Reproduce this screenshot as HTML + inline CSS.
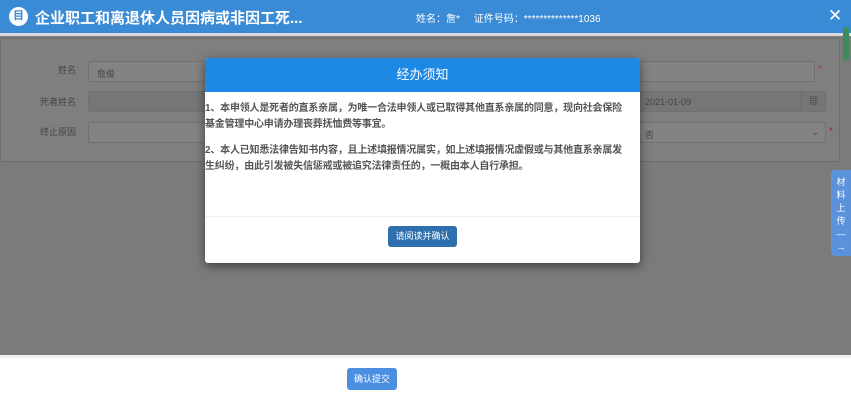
<!DOCTYPE html>
<html><head><meta charset="utf-8"><style>
*{margin:0;padding:0;box-sizing:border-box}
body{width:851px;height:404px;overflow:hidden;position:relative;font-family:"Liberation Sans","Noto Sans CJK SC",sans-serif;background:#7b7b7b}
.hdr{position:absolute;left:0;top:0;width:851px;height:33px;background:#3a8bd5;color:#fff}
.hdr .t{position:absolute;left:35px;top:7px;font-size:15px;font-weight:bold}
.hdr .ic{position:absolute;left:9px;top:7px;width:19px;height:19px;border-radius:50%;background:#fff;color:#3a8bd5;font-size:11px;text-align:center;line-height:19px;font-weight:bold}
.hdr .info{position:absolute;left:416px;top:10px;font-size:10px}
.hdr .x{position:absolute;left:828px;top:6px;font-size:17px;font-weight:300}
.strip{position:absolute;left:0;top:33px;width:851px;height:3px;background:#d8d8d8}
.panel{position:absolute;left:0;top:38px;width:840px;height:124px;background:#7f7f7f;border:1px solid #6e6e6e}
.lbl{position:absolute;font-size:9px;color:#444;text-align:right;width:60px}
.inp{position:absolute;background:#838383;border:1px solid #707070;border-radius:2px;font-size:9px;color:#444;padding:5px 8px}
.modal{position:absolute;left:205px;top:58px;width:435px;height:205px;background:#fff;border-radius:3px;box-shadow:0 3px 10px rgba(0,0,0,.5);overflow:hidden}
.mh{height:34px;background:#1e88e5;color:#fff;text-align:center;font-size:13px;line-height:34px}
.mb{padding:9px 13px 0 0;font-size:10px;letter-spacing:-0.2px;color:#555;font-weight:bold;line-height:16px}
.mb p{margin-bottom:10px}
.mf{position:absolute;left:0;top:158px;width:100%;border-top:1px solid #eee}
.btn{position:absolute;color:#fff;font-size:9px;text-align:center;border-radius:3px}
.bottom{position:absolute;left:0;top:355px;width:851px;height:49px;background:#fff;border-top:3px solid #f0f0f0}
.side{position:absolute;left:831px;top:170px;width:20px;height:86px;background:#5a93dc;border-radius:4px 0 0 4px;color:#fff;font-size:9px;text-align:center;line-height:13px;padding-top:6px}
</style></head><body>
<div class="hdr"><div class="ic">目</div><div class="t">企业职工和离退休人员因病或非因工死...</div>
<div class="info">姓名：詹*&nbsp;&nbsp;&nbsp;&nbsp;&nbsp;证件号码：**************1036</div><div class="x">✕</div></div>
<div class="strip"></div>
<div class="panel"></div>
<div class="lbl" style="left:16px;top:63px">姓名</div>
<div class="lbl" style="left:16px;top:95px">死者姓名</div>
<div class="lbl" style="left:16px;top:125px">终止原因</div>
<div class="inp" style="left:88px;top:61px;width:727px;height:21px">詹俊</div>
<div class="inp" style="left:88px;top:91px;width:738px;height:21px;background:#767676"><span style="position:absolute;left:556px;top:5px">2021-01-09</span><span style="position:absolute;right:0;top:0;width:24px;height:19px;border-left:1px solid #6a6a6a;text-align:center;line-height:19px">▦</span></div>
<div class="inp" style="left:88px;top:122px;width:738px;height:21px"><span style="position:absolute;left:556px;top:5px">否</span><span style="position:absolute;right:6px;top:4px">⌄</span></div>
<div style="position:absolute;left:818px;top:64px;color:#a33;font-size:9px">*</div>
<div style="position:absolute;left:829px;top:126px;color:#a22;font-size:10px">*</div>
<div style="position:absolute;left:843px;top:27px;width:6px;height:34px;background:#3d8a5a;border-radius:3px"></div>
<div class="modal"><div class="mh">经办须知</div>
<div class="mb"><p>1、本申领人是死者的直系亲属，为唯一合法申领人或已取得其他直系亲属的同意，现向社会保险基金管理中心申请办理丧葬抚恤费等事宜。</p>
<p>2、本人已知悉法律告知书内容，且上述填报情况属实，如上述填报情况虚假或与其他直系亲属发生纠纷，由此引发被失信惩戒或被追究法律责任的，一概由本人自行承担。</p></div>
<div class="mf"></div>
<div class="btn" style="left:183px;top:168px;width:69px;height:21px;line-height:21px;background:#2f6fad">请阅读并确认</div>
</div>
<div class="side">材<br>料<br>上<br>传<br>—<br>→</div>
<div class="bottom"><div class="btn" style="left:347px;top:10px;width:50px;height:22px;line-height:22px;background:#4a8fe0">确认提交</div></div>
</body></html>
